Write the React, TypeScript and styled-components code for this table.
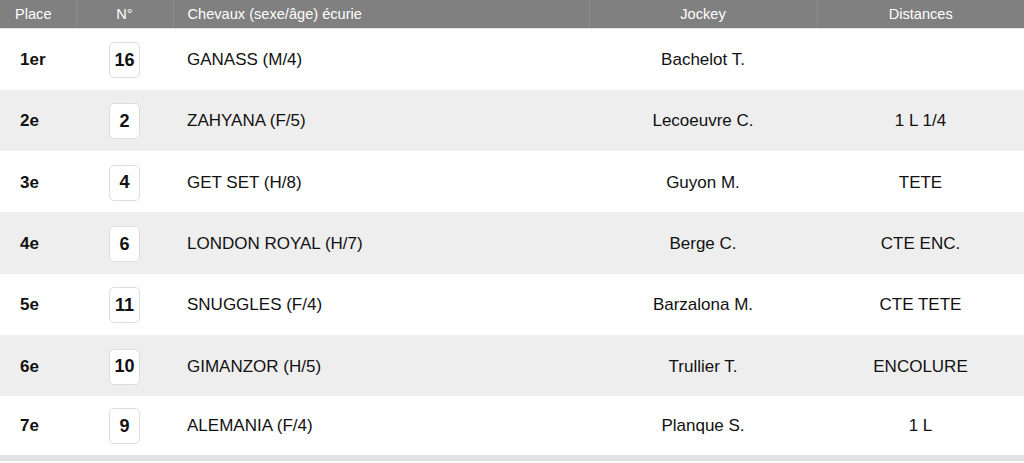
import React from 'react';
import styled, { createGlobalStyle } from 'styled-components';

const GlobalStyle = createGlobalStyle`
  html, body {
    margin: 0;
    padding: 0;
    background: #ffffff;
    font-family: "Liberation Sans", Arial, sans-serif;
  }
`;

const Table = styled.table`
  width: 1024px;
  border-collapse: collapse;
  table-layout: fixed;
  border-bottom: 6px solid #e2e2e6;
`;

const HeadCell = styled.th<{ $align?: 'left' | 'center' }>`
  height: 28px;
  padding: 0 ${(p) => (p.$align === 'left' ? '14px' : '0')};
  background: #808080;
  color: #ffffff;
  font-size: 14.6px;
  font-weight: normal;
  text-align: ${(p) => p.$align || 'center'};
  border-left: 1px solid #8c8c8c;
  border-bottom: 1px solid #e6e6e6;

  &:first-child {
    border-left: none;
    text-align: left;
    padding-left: 15px;
  }
`;

const Row = styled.tr<{ $alt: boolean }>`
  height: 61.3px;
  background: ${(p) => (p.$alt ? '#eeeeee' : '#ffffff')};
`;

const Cell = styled.td<{ $align?: 'left' | 'center' }>`
  padding: 2px ${(p) => (p.$align === 'left' ? '14px' : '0')} 0;
  font-size: 17px;
  color: #111111;
  text-align: ${(p) => p.$align || 'center'};
  vertical-align: middle;
`;

const PlaceCell = styled.td`
  padding: 2px 0 0 20px;
  font-size: 17px;
  font-weight: bold;
  color: #111111;
  vertical-align: middle;
`;

const NumBadge = styled.span`
  display: inline-flex;
  align-items: center;
  justify-content: center;
  width: 29px;
  height: 34px;
  border: 1px solid #dddddd;
  border-radius: 5px;
  background: #ffffff;
  font-size: 18px;
  font-weight: bold;
  color: #111111;
  vertical-align: middle;
`;

type Runner = {
  place: string;
  num: number;
  horse: string;
  jockey: string;
  distance: string;
};

const runners: Runner[] = [
  { place: '1er', num: 16, horse: 'GANASS (M/4)', jockey: 'Bachelot T.', distance: '' },
  { place: '2e', num: 2, horse: 'ZAHYANA (F/5)', jockey: 'Lecoeuvre C.', distance: '1 L 1/4' },
  { place: '3e', num: 4, horse: 'GET SET (H/8)', jockey: 'Guyon M.', distance: 'TETE' },
  { place: '4e', num: 6, horse: 'LONDON ROYAL (H/7)', jockey: 'Berge C.', distance: 'CTE ENC.' },
  { place: '5e', num: 11, horse: 'SNUGGLES (F/4)', jockey: 'Barzalona M.', distance: 'CTE TETE' },
  { place: '6e', num: 10, horse: 'GIMANZOR (H/5)', jockey: 'Trullier T.', distance: 'ENCOLURE' },
  { place: '7e', num: 9, horse: 'ALEMANIA (F/4)', jockey: 'Planque S.', distance: '1 L' },
];

export default function App() {
  return (
    <>
      <GlobalStyle />
      <Table>
        <colgroup>
          <col style={{ width: 76 }} />
          <col style={{ width: 97 }} />
          <col style={{ width: 416 }} />
          <col style={{ width: 228 }} />
          <col style={{ width: 207 }} />
        </colgroup>
        <thead>
          <tr>
            <HeadCell>Place</HeadCell>
            <HeadCell>N°</HeadCell>
            <HeadCell $align="left">Chevaux (sexe/âge) écurie</HeadCell>
            <HeadCell>Jockey</HeadCell>
            <HeadCell>Distances</HeadCell>
          </tr>
        </thead>
        <tbody>
          {runners.map((r, i) => (
            <Row key={r.num} $alt={i % 2 === 1}>
              <PlaceCell>{r.place}</PlaceCell>
              <Cell>
                <NumBadge>{r.num}</NumBadge>
              </Cell>
              <Cell $align="left">{r.horse}</Cell>
              <Cell>{r.jockey}</Cell>
              <Cell>{r.distance}</Cell>
            </Row>
          ))}
        </tbody>
      </Table>
    </>
  );
}
